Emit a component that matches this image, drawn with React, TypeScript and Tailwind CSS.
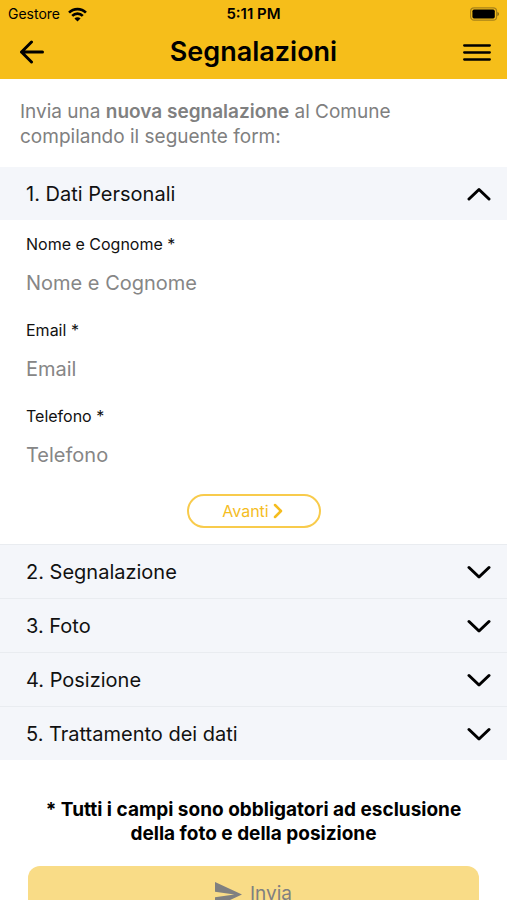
import { useState } from 'react';

interface Field {
  id: string;
  label: string;
  type: string;
}

const fields: Field[] = [
  { id: 'nome', label: 'Nome e Cognome', type: 'text' },
  { id: 'email', label: 'Email', type: 'email' },
  { id: 'telefono', label: 'Telefono', type: 'tel' },
];

const sections = ['Dati Personali', 'Segnalazione', 'Foto', 'Posizione', 'Trattamento dei dati'];

function StatusBar() {
  return (
    <div className="grid h-7 grid-cols-3 items-center px-2 text-sm">
      <div className="flex items-center gap-2">
        <span>Gestore</span>
        <svg width="19" height="15" viewBox="0 0 18 14" fill="none" stroke="currentColor" strokeWidth="2.500">
          <path d="M1 5.200a11.300 11.300 0 0 1 16 0" />
          <path d="M4 8.300a7 7 0 0 1 10 0" />
          <path d="M9 13.600 6.100 10.700a4.100 4.100 0 0 1 5.800 0z" fill="currentColor" stroke="none" />
        </svg>
      </div>
      <span className="text-center text-[15px] font-semibold">5:11 PM</span>
      <svg className="justify-self-end" width="30" height="14" viewBox="0 0 30 14">
        <rect x="1.600" y="0.800" width="26" height="12.400" rx="3.500" fill="none" stroke="#a8821a" strokeWidth="1.200" />
        <rect x="3.400" y="2.600" width="22.400" height="8.800" rx="1.600" fill="#000" />
        <path d="M28.400 5v4c1-.3 1.600-1.100 1.600-2s-.6-1.700-1.600-2z" fill="#8a6d12" />
      </svg>
    </div>
  );
}

function Chevron({ open }: { open: boolean }) {
  return (
    <svg width="24" height="14" viewBox="0 0 24 14" fill="none" stroke="#000" strokeWidth="3" strokeLinecap="round" strokeLinejoin="round">
      <path d={open ? 'M2 12 12 2.500 22 12' : 'M2 2.500 12 12l10-9.500'} />
    </svg>
  );
}

export default function App() {
  const [openSection, setOpenSection] = useState(0);
  const [formData, setFormData] = useState<Record<string, string>>({});

  const handleInputChange = (e: React.ChangeEvent<HTMLInputElement>) => {
    const { name, value } = e.target;
    setFormData({ ...formData, [name]: value });
  };

  return (
    <div className="flex h-screen flex-col bg-white font-['Inter','Liberation_Sans',sans-serif] text-black">
      <header className="shrink-0 bg-[#f6be1a] pb-[3px]">
        <StatusBar />
        <div className="flex h-12 items-center justify-between px-4">
          <button type="button" aria-label="Indietro" className="w-8 pl-1">
            <svg width="24" height="24" viewBox="0 0 24 24" fill="none" stroke="currentColor" strokeWidth="3" strokeLinecap="round" strokeLinejoin="round">
              <path d="M11.500 2 1.500 12l10 10M1.500 12h21" />
            </svg>
          </button>
          <h1 className="text-[27px] leading-8 font-semibold">Segnalazioni</h1>
          <button type="button" aria-label="Menu" className="flex w-8 justify-end">
            <svg width="28" height="18" viewBox="0 0 28 18" stroke="currentColor" strokeWidth="2.300" strokeLinecap="round">
              <path d="M1.200 2.500h25.600M1.200 9.500h25.600M1.200 16.500h25.600" />
            </svg>
          </button>
        </div>
      </header>

      <main className="flex-1 overflow-y-auto [scrollbar-width:none]">
        <p className="px-5 pt-5 pb-[18px] text-[19px] leading-[25px] text-[#808080]">
          Invia una <strong className="font-semibold">nuova segnalazione</strong> al Comune
          <br />
          compilando il seguente form:
        </p>

        <form onSubmit={(e) => e.preventDefault()}>
          <div className="divide-y divide-[#e9ecf0]">
            {sections.map((title, i) => (
              <section key={title}>
                <h2>
                  <button
                    type="button"
                    aria-expanded={openSection === i}
                    onClick={() => setOpenSection(i)}
                    className="flex h-[53px] w-full items-center justify-between bg-[#f4f6fa] pr-4 pl-[26px] text-xl text-[#111]"
                  >
                    {i + 1}. {title}
                    <Chevron open={openSection === i} />
                  </button>
                </h2>

                {/* Dati personali */}
                {i === 0 && openSection === 0 && (
                  <div className="px-[26px] pt-3 pb-4">
                    {fields.map((field) => (
                      <div key={field.id} className="flex h-[86px] flex-col">
                        <label htmlFor={field.id} className="text-base leading-6 text-[#111]">
                          {field.label} *
                        </label>
                        <input
                          id={field.id}
                          name={field.id}
                          type={field.type}
                          placeholder={field.label}
                          value={formData[field.id] || ''}
                          onChange={handleInputChange}
                          className="h-[54px] text-xl outline-none placeholder:text-[#868686]"
                        />
                      </div>
                    ))}
                    <button
                      type="button"
                      onClick={() => setOpenSection(1)}
                      className="mx-auto mt-1 flex h-[34px] w-[134px] items-center justify-center gap-1 rounded-full border-2 border-[#f8cb4c] text-base text-[#f5bd1f]"
                    >
                      Avanti
                      <svg width="12" height="16" viewBox="0 0 12 16" fill="none" stroke="currentColor" strokeWidth="2.500" strokeLinecap="round" strokeLinejoin="round">
                        <path d="M2 2l6 6-6 6" />
                      </svg>
                    </button>
                  </div>
                )}
              </section>
            ))}
          </div>

          <p className="px-7 pt-[38px] pb-5 text-center text-[19px] leading-6 font-bold">
            * Tutti i campi sono obbligatori ad esclusione
            <br />
            della foto e della posizione
          </p>

          <div className="px-7 pb-6">
            <button
              type="submit"
              disabled
              className="flex h-14 w-full items-center justify-center gap-2 rounded-xl bg-[#f9dc87] text-[19px] text-[#808080]"
            >
              <svg width="27" height="25" viewBox="48 64 416 384" fill="currentColor">
                <path d="M48 448l416-192L48 64v149.333L346 256 48 298.667z" />
              </svg>
              Invia
            </button>
          </div>
        </form>
      </main>
    </div>
  );
}
